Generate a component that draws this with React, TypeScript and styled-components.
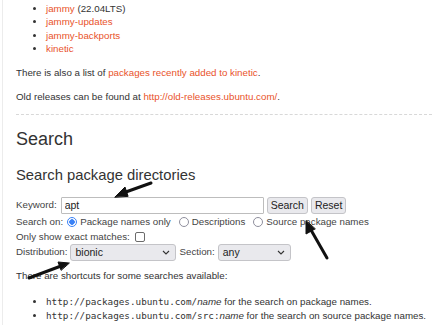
import styled, {createGlobalStyle} from 'styled-components';

const GlobalStyle = createGlobalStyle`
	html, body {
		margin: 0;
		padding: 0;
		background: #ffffff;
	}
	body {
		font-family: 'Liberation Sans', Arial, sans-serif;
		color: #333333;
	}
`;

const Page = styled.div`
	position: relative;
	width: 437px;
	height: 325px;
	overflow: hidden;
	box-sizing: border-box;
	margin-left: 2px;
	border-left: 1px solid #ececec;
	padding: 2px 7px 0 13px;
	font-size: 9.75px;
	line-height: 14px;
`;

const ReleaseList = styled.ul`
	margin: 0 0 10px;
	padding-left: 30px;
	li {
		line-height: 13.4px;
	}
`;

const Link = styled.a`
	color: #e9532b;
	text-decoration: none;
`;

const Para = styled.p`
	margin: 0 0 10px;
`;

const Rule = styled.hr`
	margin: 0;
	border: none;
	border-top: 1px dashed #d8d8d8;
`;

const Heading = styled.h2`
	margin: 12px 0 0;
	font-size: 18px;
	font-weight: 400;
	line-height: 24px;
	color: #333333;
`;

const SubHeading = styled.h3`
	margin: 14px 0 0;
	font-size: 14.8px;
	font-weight: 400;
	line-height: 20px;
	color: #333333;
`;

const Form = styled.form`
	margin-top: 11px;
	display: flex;
	flex-direction: column;
`;

const FieldRow = styled.div<{$tall?: boolean}>`
	display: flex;
	align-items: center;
	gap: 3px;
	height: ${(p) => (p.$tall ? 19 : 15)}px;
	color: #444444;
`;

const TextInput = styled.input`
	box-sizing: border-box;
	width: 203px;
	height: 17px;
	margin-left: 1px;
	padding: 0 3px;
	border: 1px solid #bdbdbd;
	border-radius: 1px;
	font-family: 'Liberation Sans', Arial, sans-serif;
	font-size: 10.5px;
	color: #222222;
	outline: none;
`;

const Button = styled.button`
	box-sizing: border-box;
	height: 17px;
	padding: 0 3px;
	border: 1px solid #c4c4c8;
	border-radius: 3px;
	background: #e9e9ed;
	font-family: 'Liberation Sans', Arial, sans-serif;
	font-size: 10.5px;
	color: #222222;
`;

const Radio = styled.span<{$checked?: boolean}>`
	display: inline-block;
	box-sizing: border-box;
	width: 10px;
	height: 10px;
	margin: 0 3px 0 4px;
	border-radius: 50%;
	border: ${(p) => (p.$checked ? '1px solid #3b82f6' : '1px solid #8f8f9d')};
	background: ${(p) =>
		p.$checked ? 'radial-gradient(circle, #3b82f6 0 2.5px, #fff 3px)' : '#fff'};
`;

const Checkbox = styled.span`
	display: inline-block;
	box-sizing: border-box;
	width: 10px;
	height: 10px;
	margin-left: 2px;
	border: 1px solid #6b6b6b;
	border-radius: 2px;
	background: #fff;
`;

const Choice = styled.label`
	display: inline-flex;
	align-items: center;
	margin-right: 4px;
`;

const Select = styled.div<{$width: number}>`
	box-sizing: border-box;
	display: flex;
	align-items: center;
	justify-content: space-between;
	flex-shrink: 0;
	width: ${(p) => p.$width}px;
	height: 17px;
	padding: 0 5px 0 4px;
	border: 1px solid #c4c4c8;
	border-radius: 3px;
	background: #e9e9ed;
	font-size: 10.5px;
	color: #222222;
`;

const Shortcuts = styled.ul`
	margin: 12px 0 0;
	padding-left: 30px;
	li {
		line-height: 14px;
	}
	code {
		font-family: 'DejaVu Sans Mono', monospace;
		font-size: 9.3px;
	}
`;

const Arrows = styled.svg`
	position: absolute;
	left: 0;
	top: 0;
	pointer-events: none;
`;

function Chevron() {
	return (
		<svg width="8" height="5" viewBox="0 0 8 5">
			<path d="M1 1 L4 4 L7 1" fill="none" stroke="#333" strokeWidth="1.1" />
		</svg>
	);
}

export default function App() {
	return (
		<>
			<GlobalStyle />
			<Page>
				<ReleaseList>
					<li>
						<Link>jammy</Link> (22.04LTS)
					</li>
					<li>
						<Link>jammy-updates</Link>
					</li>
					<li>
						<Link>jammy-backports</Link>
					</li>
					<li>
						<Link>kinetic</Link>
					</li>
				</ReleaseList>
				<Para>
					There is also a list of <Link>packages recently added to kinetic</Link>.
				</Para>
				<Para>
					Old releases can be found at <Link>http://old-releases.ubuntu.com/</Link>.
				</Para>
				<Rule />
				<Heading>Search</Heading>
				<SubHeading>Search package directories</SubHeading>
				<Form>
					<FieldRow $tall>
						Keyword: <TextInput defaultValue="apt" />
						<Button type="button">Search</Button>
						<Button type="button">Reset</Button>
					</FieldRow>
					<FieldRow style={{gap: 0}}>
						Search on:
						<Choice>
							<Radio $checked />
							Package names only
						</Choice>
						<Choice>
							<Radio />
							Descriptions
						</Choice>
						<Choice>
							<Radio />
							Source package names
						</Choice>
					</FieldRow>
					<FieldRow>
						Only show exact matches: <Checkbox />
					</FieldRow>
					<FieldRow>
						Distribution:
						<Select $width={106}>
							bionic <Chevron />
						</Select>
						Section:
						<Select $width={73}>
							any <Chevron />
						</Select>
					</FieldRow>
				</Form>
				<Para style={{marginTop: 9}}>There are shortcuts for some searches available:</Para>
				<Shortcuts>
					<li>
						<code>http://packages.ubuntu.com/</code>
						<em>name</em> for the search on package names.
					</li>
					<li>
						<code>http://packages.ubuntu.com/src:</code>
						<em>name</em> for the search on source package names.
					</li>
				</Shortcuts>
				<Arrows width="437" height="325" viewBox="0 0 437 325">
					<g fill="#111" stroke="#111" strokeLinecap="round" strokeLinejoin="round">
						<path d="M148 183 L120 193" strokeWidth="3" fill="none" />
						<path d="M112 197 L122 187 L125 196 Z" strokeWidth="1" />
						<path d="M324 258 L308 230" strokeWidth="3" fill="none" />
						<path d="M303 221 L303 234 L312 229 Z" strokeWidth="1" />
						<path d="M26 278 L58 266" strokeWidth="3" fill="none" />
						<path d="M66 263 L55 262 L58 270 Z" strokeWidth="1" />
					</g>
				</Arrows>
			</Page>
		</>
	);
}
